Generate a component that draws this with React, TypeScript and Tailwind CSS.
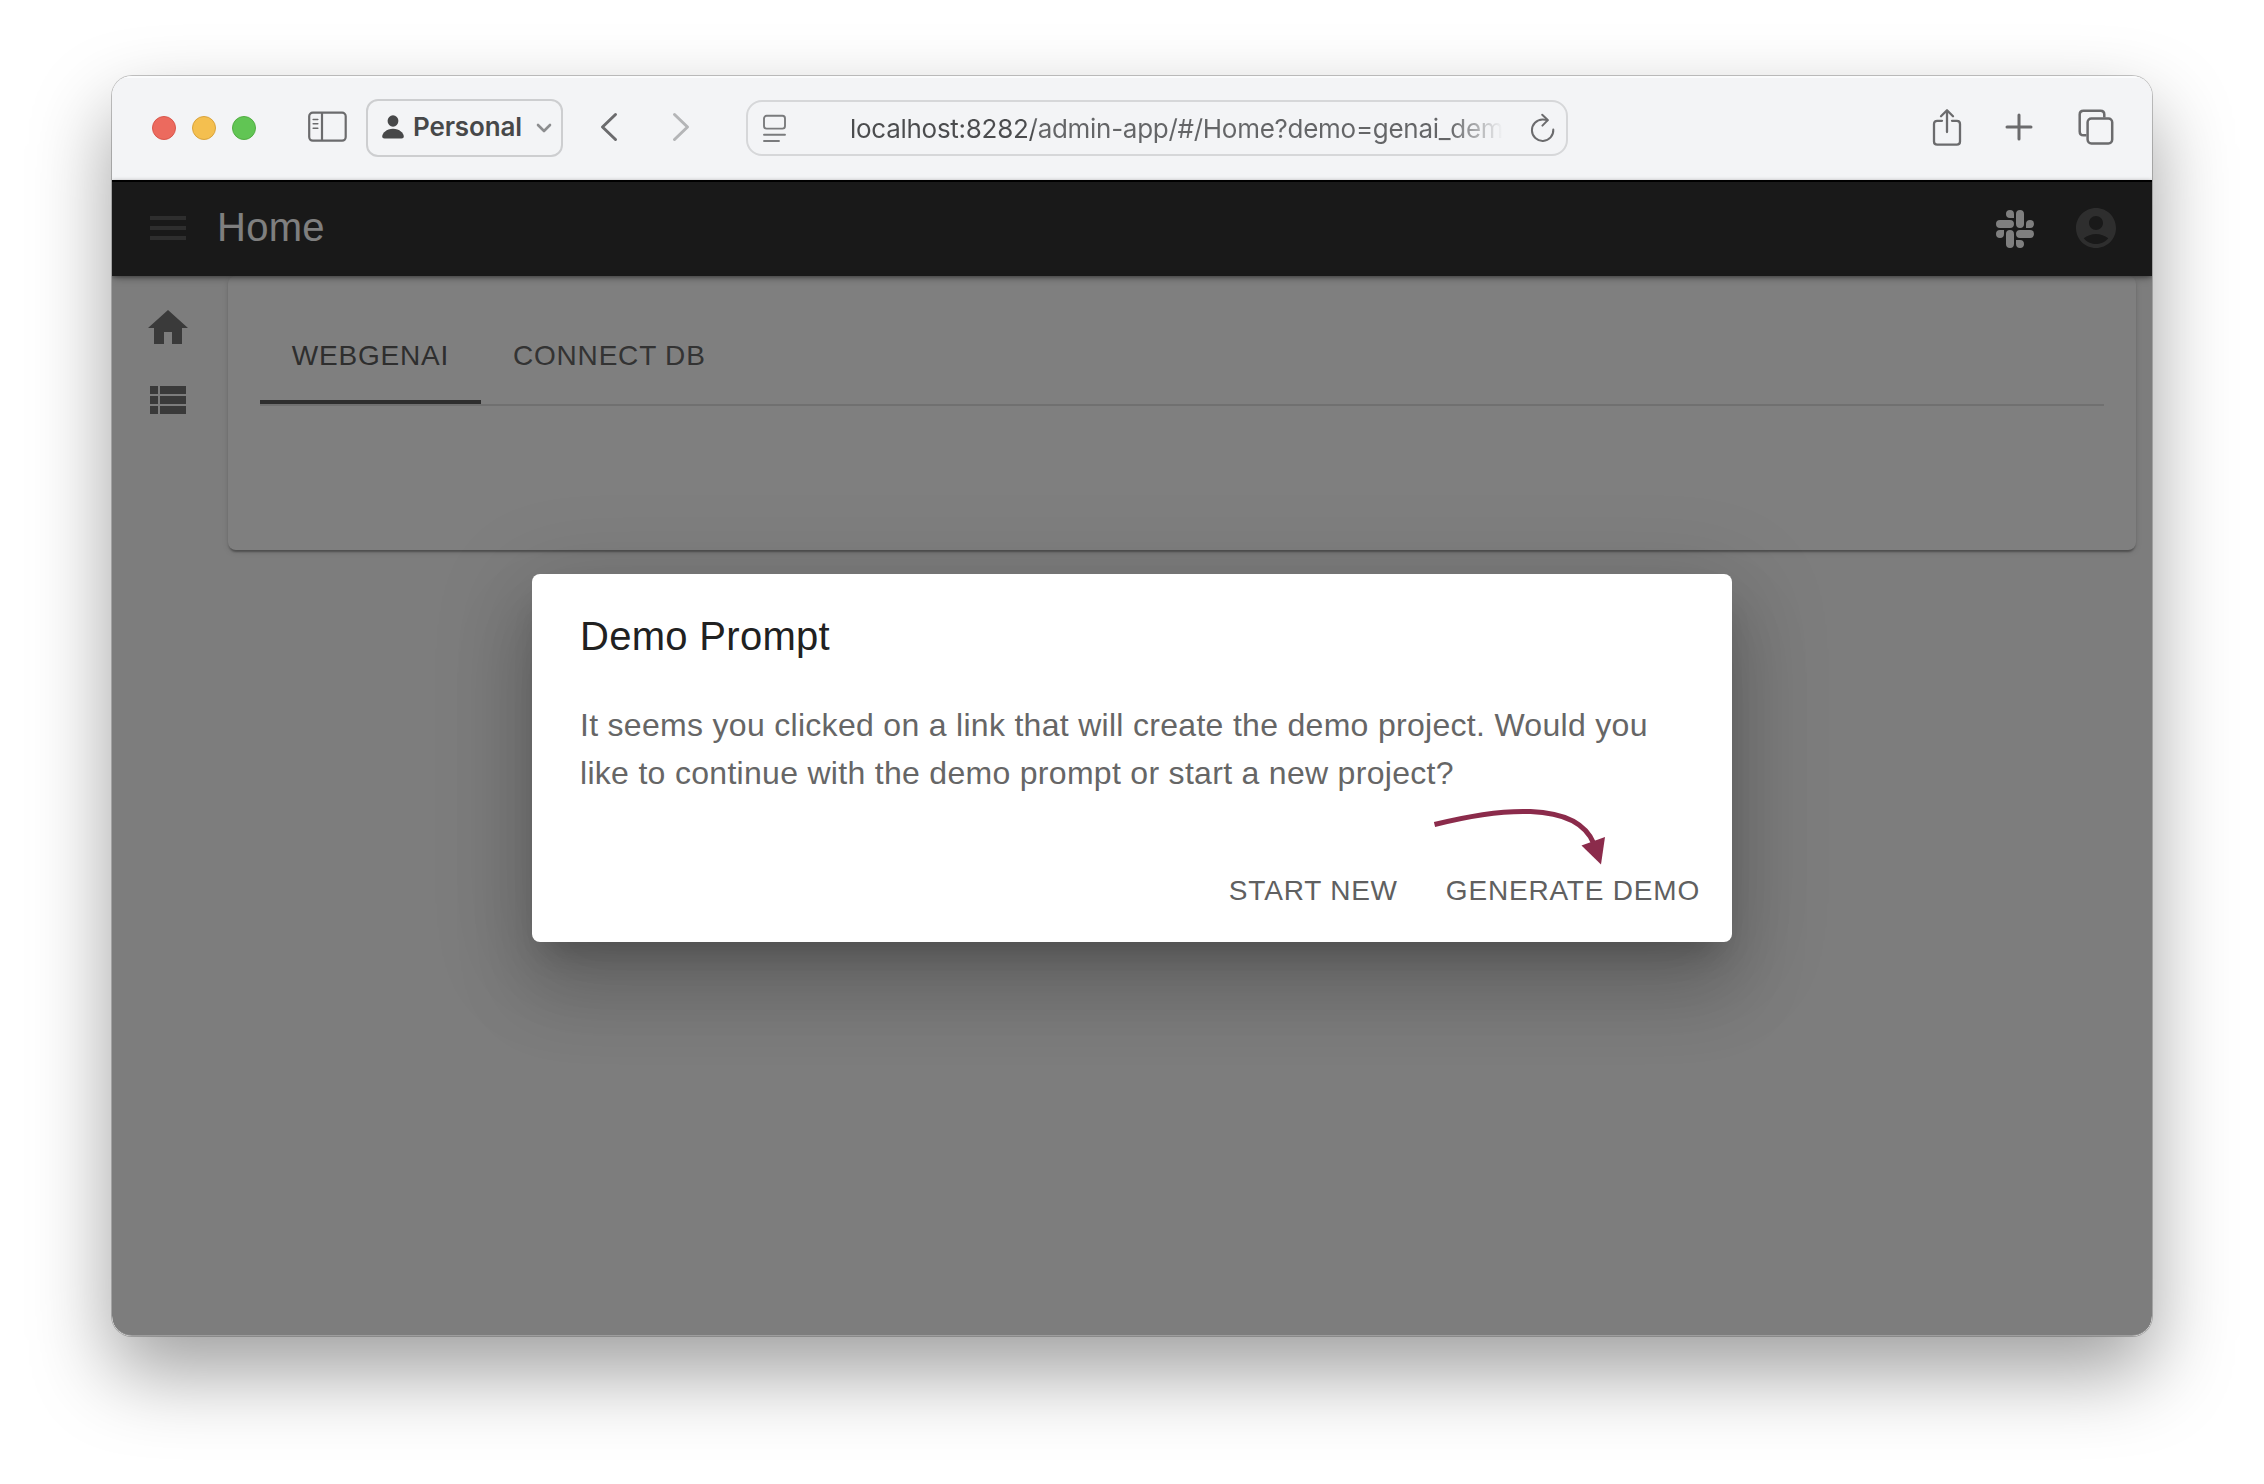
import React from "react";

const SLACK_PATH =
  "M5.042 15.165a2.528 2.528 0 0 1-2.52 2.523A2.528 2.528 0 0 1 0 15.165a2.527 2.527 0 0 1 2.522-2.52h2.52v2.52zM6.313 15.165a2.527 2.527 0 0 1 2.521-2.52 2.527 2.527 0 0 1 2.521 2.52v6.313A2.528 2.528 0 0 1 8.834 24a2.528 2.528 0 0 1-2.521-2.522v-6.313zM8.834 5.042a2.528 2.528 0 0 1-2.521-2.52A2.528 2.528 0 0 1 8.834 0a2.528 2.528 0 0 1 2.521 2.522v2.52H8.834zM8.834 6.313a2.528 2.528 0 0 1 2.521 2.521 2.528 2.528 0 0 1-2.521 2.521H2.522A2.528 2.528 0 0 1 0 8.834a2.528 2.528 0 0 1 2.522-2.521h6.312zM18.956 8.834a2.528 2.528 0 0 1 2.522-2.521A2.528 2.528 0 0 1 24 8.834a2.528 2.528 0 0 1-2.522 2.521h-2.522V8.834zM17.688 8.834a2.528 2.528 0 0 1-2.523 2.521 2.527 2.527 0 0 1-2.520-2.521V2.522A2.527 2.527 0 0 1 15.165 0a2.528 2.528 0 0 1 2.523 2.522v6.312zM15.165 18.956a2.528 2.528 0 0 1 2.523 2.522A2.528 2.528 0 0 1 15.165 24a2.527 2.527 0 0 1-2.520-2.522v-2.522h2.520zM15.165 17.688a2.527 2.527 0 0 1-2.520-2.523 2.526 2.526 0 0 1 2.520-2.520h6.313A2.527 2.527 0 0 1 24 15.165a2.528 2.528 0 0 1-2.522 2.523h-6.313z";

function MaterialIcon({ d, className }: { d: string; className: string }) {
  return (
    <svg viewBox="0 0 24 24" className={`size-12 shrink-0 ${className}`} fill="currentColor">
      <path d={d} />
    </svg>
  );
}

function BrowserToolbar() {
  return (
    <header className="flex h-[104px] items-center bg-[#f3f4f6] pl-10 text-[#6b6b6d] shadow-[inset_0_2px_0_#fafbfc]">
      <div className="flex gap-4">
        <span className="size-6 rounded-full border border-[#d9574c] bg-[#ec6a5e]" />
        <span className="size-6 rounded-full border border-[#d9a33c] bg-[#f4bf4f]" />
        <span className="size-6 rounded-full border border-[#52ad43] bg-[#61c554]" />
      </div>

      <svg viewBox="0 0 40 32" className="mb-0.5 ml-[51px] h-8 w-10 shrink-0" fill="none" stroke="currentColor">
        <rect x="2.2" y="1.7" width="36.5" height="28" rx="3.6" strokeWidth="2.2" />
        <path d="M15 2v27.500" strokeWidth="2.200" />
        <path d="M6.200 8.500h4.600M6.200 12.800h4.600M6.200 17.200h4.600" strokeWidth="1.600" strokeLinecap="round" />
      </svg>

      <button className="ml-[19px] flex h-[58px] w-[197px] shrink-0 items-center rounded-xl border-2 border-[#cdced0] pl-3.5 text-[#474849]">
        <svg viewBox="0 0 22 24" className="-mt-0.5 h-6 w-[22px] shrink-0" fill="currentColor">
          <ellipse cx="11" cy="6" rx="5.400" ry="5.700" />
          <path d="M2.500 23.500C1 23.500.2 22.800.2 21.500c0-3.200 4.200-7.700 10.800-7.700s10.800 4.500 10.800 7.700c0 1.300-.8 2-2.300 2z" />
        </svg>
        <span className="ml-[9px] -mt-0.5 w-[113px] text-left font-['Inter',sans-serif] text-[26px] leading-8 font-semibold tracking-[-0.15px]">
          Personal
        </span>
        <svg viewBox="0 0 16 10" className="ml-[10px] h-2.5 w-4 shrink-0 text-[#8c8d8f]" fill="none" stroke="currentColor">
          <path d="M2 2l6 6 6-6" strokeWidth="2.600" strokeLinecap="round" strokeLinejoin="round" />
        </svg>
      </button>

      <svg viewBox="0 0 20 32" className="mb-0.5 ml-9 h-8 w-5 shrink-0" fill="none" stroke="currentColor">
        <path d="M16.500 3.500L3.500 16l13 12.500" strokeWidth="3" strokeLinecap="round" strokeLinejoin="round" />
      </svg>
      <svg viewBox="0 0 20 32" className="mb-0.5 ml-[52px] h-8 w-5 shrink-0 text-[#b4b5b7]" fill="none" stroke="currentColor">
        <path d="M3.500 3.500l13 12.500-13 12.500" strokeWidth="3" strokeLinecap="round" strokeLinejoin="round" />
      </svg>

      <div className="ml-[55px] flex h-14 w-[822px] shrink-0 items-center rounded-2xl border-2 border-[#d6d7d9] pl-[14px]">
        <svg viewBox="0 0 24 28" className="h-7 w-6 shrink-0 text-[#7a7b7d]" fill="none" stroke="currentColor">
          <rect x="2" y="1.800" width="21" height="12.800" rx="2.600" strokeWidth="1.900" />
          <path d="M2 20.700h21M2 27h15" strokeWidth="1.900" strokeLinecap="round" />
        </svg>
        <div className="mt-0.5 -mr-[44px] ml-[64px] w-[700px] shrink-0 bg-[linear-gradient(90deg,#4b4c4e_0,#4b4c4e_183px,#646567_184px,#646567_585px,#646567_600px,#64656700_653px)] bg-clip-text font-['Inter',sans-serif] text-[26px] leading-9 tracking-[-0.28px] whitespace-nowrap text-transparent">
          localhost:8282/admin-app/#/Home?demo=genai_demo
        </div>
        <svg viewBox="0 0 26 30" className="ml-[24px] h-[30px] w-[26px] shrink-0" fill="none" stroke="currentColor">
          <path d="M23.300 16.500A10.700 10.700 0 1 1 12.600 6.500c2 0 3.500.2 4.900.8" strokeWidth="2" strokeLinecap="round" />
          <path d="M12.200 1.800l5.600 5.300-5.400 5.500" strokeWidth="2" strokeLinecap="round" strokeLinejoin="round" />
        </svg>
      </div>

      <div className="mb-[3px] ml-auto flex shrink-0 items-center pr-9">
        <svg viewBox="0 0 32 40" className="h-10 w-8" fill="none" stroke="currentColor" strokeWidth="2.300" strokeLinecap="round" strokeLinejoin="round">
          <path d="M11 13.800H6.200c-2 0-3.200 1.200-3.200 3.200v17.500c0 2 1.200 3.200 3.200 3.200h19.600c2 0 3.200-1.200 3.200-3.200V17c0-2-1.200-3.200-3.200-3.200H21" />
          <path d="M16 25V3.500M10 9.300l6-6 6 6" />
        </svg>
        <svg viewBox="0 0 32 32" className="ml-[40px] size-8" fill="none" stroke="currentColor" strokeWidth="3" strokeLinecap="round">
          <path d="M16 4v24M4 16h24" />
        </svg>
        <svg viewBox="0 0 40 40" className="ml-[41px] size-10" fill="none" stroke="currentColor" strokeWidth="2.500">
          <path d="M10.500 28.300H7.500c-2.500 0-3.800-1.300-3.800-3.800V7.500C3.700 5 5 3.700 7.500 3.700h17c2.500 0 3.800 1.300 3.800 3.800v3" />
          <rect x="11.600" y="11.400" width="24.600" height="25" rx="3.800" />
        </svg>
      </div>
    </header>
  );
}

function AppBar() {
  return (
    <div className="relative z-10 flex h-24 items-center border-t-2 border-black bg-[#323232] pr-8 pb-0.5 pl-8 shadow-[0_4px_8px_-2px_rgba(0,0,0,0.3),0_1px_4px_rgba(0,0,0,0.35)]">
      <MaterialIcon className="text-[#5c5c5c]" d="M3 18h18v-2H3v2zm0-5h18v-2H3v2zm0-7v2h18V6H3z" />
      <h1 className="mb-[3px] ml-[25px] flex-1 text-[40px] leading-[60px] tracking-[0.3px] text-white">Home</h1>
      <svg viewBox="0 0 24 24" className="mt-0.5 mr-[38px] size-[38px] text-white" fill="currentColor">
        <path d={SLACK_PATH} />
      </svg>
      <MaterialIcon
        className="text-[#5c5c5c]"
        d="M12 2C6.480 2 2 6.480 2 12s4.480 10 10 10 10-4.480 10-10S17.520 2 12 2zm0 4c1.930 0 3.500 1.570 3.500 3.500S13.930 13 12 13s-3.500-1.570-3.500-3.500S10.070 6 12 6zm0 14c-2.030 0-4.430-.82-6.140-2.880C7.550 15.800 9.680 15 12 15s4.450.8 6.140 2.120C16.430 19.180 14.030 20 12 20z"
      />
    </div>
  );
}

function HomePage() {
  return (
    <main className="flex flex-1 items-start bg-[#fafafa]">
      <nav className="flex w-[116px] shrink-0 flex-col items-start gap-6 pt-7 pl-8 text-[#747474]">
        <MaterialIcon className="" d="M10 20v-6h4v6h5v-8h3L12 3 2 12h3v8z" />
        <MaterialIcon
          className=""
          d="M3 14h4v-4H3v4zm0 5h4v-4H3v4zM3 9h4V5H3v4zm5 5h13v-4H8v4zm0 5h13v-4H8v4zM8 5v4h13V5H8z"
        />
      </nav>
      <section className="mr-4 h-[274px] flex-1 rounded-lg bg-white px-8 pt-8 shadow-[0_4px_2px_-2px_rgba(0,0,0,0.2),0_2px_2px_rgba(0,0,0,0.14),0_2px_6px_rgba(0,0,0,0.12)]">
        <div className="flex border-b-2 border-[#e0e0e0] text-[28px] leading-[35px] tracking-[0.8px]">
          <div className="flex h-24 w-[221px] items-center justify-center border-b-4 border-[#5c5c5c] pt-0.5 text-[#5c5c5c]">WEBGENAI</div>
          <div className="flex h-24 items-center px-8 pb-0.5 text-[#666]">CONNECT DB</div>
        </div>
      </section>
    </main>
  );
}

function DemoDialog() {
  return (
    <div className="relative flex h-[368px] w-[1200px] flex-col rounded-lg bg-white shadow-[0_22px_30px_-14px_rgba(0,0,0,0.2),0_48px_76px_6px_rgba(0,0,0,0.14),0_18px_92px_16px_rgba(0,0,0,0.12)]">
      <h2 className="px-12 pt-[30px] pb-[33px] text-[40px] leading-[64px] tracking-[0.3px] text-[#212121]">Demo Prompt</h2>
      <p className="px-12 text-[32px] leading-[48px] tracking-[0.3px] text-[#666]">
        It seems you clicked on a link that will create the demo project. Would you
        <br />
        like to continue with the demo prompt or start a new project?
      </p>
      <div className="mt-auto flex justify-end gap-12 pr-8 pb-[27px] text-[28px] leading-[49px] tracking-[0.8px] text-[#606060]">
        <button>START NEW</button>
        <button>GENERATE DEMO</button>
      </div>
      <svg viewBox="0 0 180 60" className="absolute top-[232px] left-[898px] h-[60px] w-[180px]">
        <path d="M4.500 18.500C66 3 146-7 164 38" fill="none" stroke="#8b2b4b" strokeWidth="5" />
        <path d="M151.500 39.500L175 31l-4 27.500z" fill="#8b2b4b" />
      </svg>
    </div>
  );
}

export default function App() {
  return (
    <div className="flex h-[1484px] w-[2264px] justify-center bg-white pt-[76px] font-['Liberation_Sans',sans-serif]">
      <div className="h-[1260px] w-[2040px] rounded-[20px] shadow-[0_0_0_1px_rgba(0,0,0,0.22),0_36px_80px_rgba(0,0,0,0.38)]">
        <div className="flex h-full flex-col overflow-hidden rounded-[20px]">
          <BrowserToolbar />
          <div className="relative flex flex-1 flex-col">
            <AppBar />
            <HomePage />
            <div className="absolute inset-0 z-20 flex items-center justify-center rounded-b-[20px] bg-black/50 shadow-[inset_0_-2px_0_-1px_rgba(255,255,255,0.25)]">
              <DemoDialog />
            </div>
          </div>
        </div>
      </div>
    </div>
  );
}
